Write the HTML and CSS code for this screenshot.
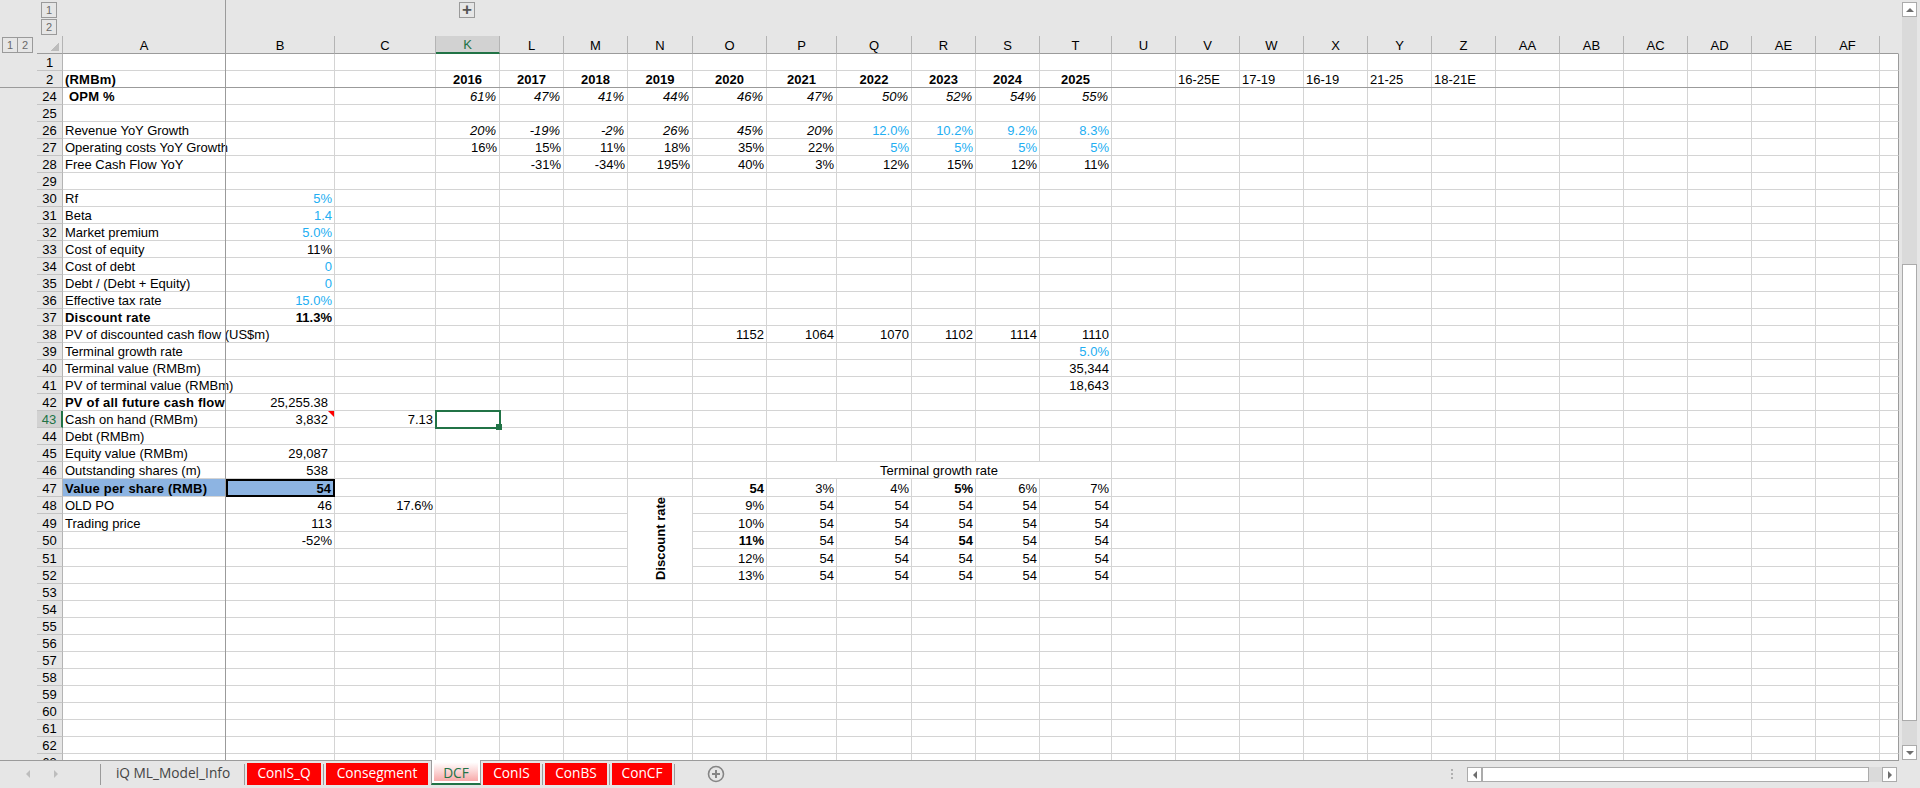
FILE: index.html
```html
<!DOCTYPE html>
<html lang="en">
<head>
  <meta charset="utf-8">
  <title>DCF - Model</title>
  <link rel="stylesheet" href="styles.css">
</head>
<body>
  <div class="app">
    <div class="freeze-v"></div>
    <div class="freeze-h"></div>

    <div class="workspace">
      <div class="pane">
        <div class="outline-top">
          <div class="outline-levels">
            <span class="outline-btn">1</span>
            <span class="outline-btn">2</span>
          </div>
          <span class="outline-btn outline-plus">+</span>
        </div>
        <div class="sheet-row">
          <div class="gutter">
            <span class="outline-btn">1</span><span class="outline-btn outline-joined">2</span>
          </div>
          <div class="grid-clip">
            <table id="grid" class="grid"></table>
          </div>
        </div>
      </div>

      <div class="vscroll">
        <span class="sb-btn"><i class="arrow arrow-up"></i></span>
        <span class="sb-thumb-v"></span>
        <span class="sb-btn sb-btn-end"><i class="arrow arrow-down"></i></span>
      </div>
    </div>

    <div class="tabbar">
      <div class="tab-nav">
        <i class="arrow arrow-left arrow-dim"></i>
        <i class="arrow arrow-right arrow-dim"></i>
      </div>
      <span class="tab-sep"></span>
      <span class="tab tab-plain w-info">iQ ML_Model_Info</span>
      <span class="tab-sep"></span>
      <span class="tab tab-red w-isq">ConIS_Q</span>
      <span class="tab-sep"></span>
      <span class="tab tab-red w-seg">Consegment</span>
      <span class="tab tab-active">DCF</span>
      <span class="tab tab-red w-is">ConIS</span>
      <span class="tab-sep"></span>
      <span class="tab tab-red w-bs">ConBS</span>
      <span class="tab-sep"></span>
      <span class="tab tab-red w-cf">ConCF</span>
      <span class="tab-sep"></span>
      <svg class="add-sheet" width="18" height="18" viewBox="0 0 18 18">
        <circle cx="9" cy="9" r="7.5" fill="none" stroke="#858585" stroke-width="1.6"/>
        <path d="M9 5v8M5 9h8" stroke="#858585" stroke-width="2" fill="none"/>
      </svg>

      <div class="tab-right">
        <div class="resize-dots"><i></i><i></i><i></i></div>
        <div class="hscroll">
          <span class="sb-btn"><i class="arrow arrow-left"></i></span>
          <span class="sb-thumb-h"></span>
          <span class="sb-btn"><i class="arrow arrow-right"></i></span>
        </div>
      </div>
    </div>
  </div>

  <script src="script.js"></script>
</body>
</html>
```

FILE: styles.css
```css
html, body {
  margin: 0;
  padding: 0;
  height: 100%;
  overflow: hidden;
  background-color: #e6e6e6;
  color: #000;
  font-family: "Liberation Sans", Arial, sans-serif;
  font-size: 13px;
}

.app {
  position: relative;
  display: flex;
  flex-direction: column;
  width: 1920px;
  height: 788px;
}

.freeze-v {
  position: absolute;
  top: 0;
  left: 225px;
  width: 1px;
  height: 760px;
  background: #9b9b9b;
  z-index: 1;
}

.freeze-h {
  position: absolute;
  top: 87px;
  left: 0;
  width: 1899px;
  height: 1px;
  background: #9b9b9b;
  z-index: 1;
}

.workspace {
  display: flex;
  height: 760px;
}

.pane {
  display: flex;
  flex-direction: column;
  width: 1899px;
}

/* outline buttons */
.outline-top {
  display: flex;
  height: 36px;
  padding-left: 41px;
  box-sizing: border-box;
}

.outline-levels {
  display: flex;
  flex-direction: column;
  gap: 1px;
  padding-top: 2px;
}

.outline-btn {
  display: block;
  width: 16px;
  height: 16px;
  box-sizing: border-box;
  border: 1px solid #9a9a9a;
  color: #6a6a6a;
  font-size: 11px;
  line-height: 14px;
  text-align: center;
}

.outline-plus {
  margin: 2px 0 0 402px;
  color: #555;
  font-size: 17px;
  font-weight: bold;
  line-height: 13px;
}

.sheet-row {
  display: flex;
  height: 724px;
}

.gutter {
  display: flex;
  align-items: flex-start;
  width: 37px;
  padding: 1px 0 0 2px;
  box-sizing: border-box;
}

.outline-joined {
  margin-left: -1px;
}

.grid-clip {
  width: 1862px;
  height: 724px;
  overflow: hidden;
  background: #fff;
}

/* sheet */
.grid {
  table-layout: fixed;
  width: 1862px;
  border-collapse: separate;
  border-spacing: 0;
}

.grid td,
.grid th {
  box-sizing: border-box;
  height: 17px;
  padding: 0 2px 0 2px;
  border-right: 1px solid #d4d4d4;
  border-bottom: 1px solid #d4d4d4;
  font-size: 13px;
  font-weight: normal;
  line-height: 15px;
  text-align: right;
  white-space: nowrap;
  vertical-align: bottom;
}

.grid th.col {
  height: 18px;
  padding: 0;
  background: #e6e6e6;
  border-right-color: #b4b4b4;
  border-bottom-color: #9b9b9b;
  text-align: center;
}

.grid th.col-rest {
  border-right-color: transparent;
}

.grid th.col-on {
  background: #d2d2d2;
  color: #217346;
  border-bottom: 2px solid #217346;
}

.grid th.corner {
  background:
    linear-gradient(135deg, transparent 50%, #bcbcbc 50%) 13px 6px / 9px 9px no-repeat,
    #e6e6e6;
  border-right-color: #b4b4b4;
  border-bottom-color: #9b9b9b;
}

.grid th.rownum {
  padding: 0;
  background: #e6e6e6;
  border-right-color: #b4b4b4;
  border-bottom-color: #c4c4c4;
  text-align: center;
}

.grid th.rownum-on {
  background: #d2d2d2;
  color: #217346;
  border-right: 2px solid #217346;
}

.grid td.last {
  border-right-color: #9b9b9b;
}

.grid .tall td,
.grid .tall th {
  height: 18px;
}

.grid td.l { text-align: left; }
.grid td.c { text-align: center; }
.grid td.b { font-weight: bold; }
.grid td.l.b { letter-spacing: 0.2px; }
.grid td.i { font-style: italic; padding-right: 3px; }
.grid td.blue { color: #22aef2; }
.grid td.pad { padding-right: 6px; }
.grid td.clip { overflow: hidden; }
.grid td.indent { padding-left: 6px; }
.grid td.band { background: #8db4e2; }

.grid td.boxed {
  position: relative;
  z-index: 2;
  outline: 2px solid #000;
  outline-offset: -2px;
  padding-right: 3px;
}

.grid td.note {
  position: relative;
}

.grid td.note::after {
  content: "";
  position: absolute;
  top: 0;
  right: 0;
  border-top: 6px solid #f00;
  border-left: 6px solid transparent;
}

.grid td.selected {
  position: relative;
  z-index: 2;
  outline: 2px solid #217346;
  outline-offset: -1px;
}

.grid td.selected::after {
  content: "";
  position: absolute;
  right: -3px;
  bottom: -3px;
  width: 6px;
  height: 6px;
  background: #217346;
}

.grid td.merged-v {
  padding: 0;
  text-align: center;
  vertical-align: middle;
}

.rotated {
  display: inline-block;
  writing-mode: vertical-rl;
  transform: rotate(180deg);
  font-weight: bold;
}

/* scrollbars */
.vscroll {
  display: flex;
  flex-direction: column;
  width: 15px;
  margin: 2px 3px 0 3px;
  background: #dadada;
}

.sb-btn {
  display: flex;
  flex: none;
  align-items: center;
  justify-content: center;
  width: 15px;
  height: 15px;
  box-sizing: border-box;
  border: 1px solid #ababab;
  background: #fff;
}

.sb-btn-end {
  margin-top: auto;
}

.sb-thumb-v {
  width: 15px;
  height: 457px;
  margin-top: 247px;
  box-sizing: border-box;
  border: 1px solid #ababab;
  background: #fff;
}

.arrow {
  display: block;
  width: 0;
  height: 0;
  border: 4px solid transparent;
}

.arrow-up { border-bottom-color: #6e6e6e; border-top-width: 0; }
.arrow-down { border-top-color: #6e6e6e; border-bottom-width: 0; }
.arrow-left { border-right-color: #6e6e6e; border-left-width: 0; }
.arrow-right { border-left-color: #6e6e6e; border-right-width: 0; }
.arrow-dim.arrow-left { border-right-color: #bdbdbd; }
.arrow-dim.arrow-right { border-left-color: #bdbdbd; }

/* sheet tabs */
.tabbar {
  display: flex;
  align-items: flex-start;
  height: 28px;
  box-sizing: border-box;
  padding-left: 26px;
  background:
    linear-gradient(#9b9b9b, #9b9b9b) 0 0 / 1899px 1px no-repeat,
    #e6e6e6;
  font-family: "Open Sans", "Noto Sans", sans-serif;
  font-size: 13.7px;
}

.tab-nav {
  display: flex;
  gap: 24px;
  width: 73px;
  padding-top: 10px;
}

.tab-sep {
  flex: none;
  width: 1px;
  height: 21px;
  margin: 4px 1px 0 1px;
  background: #9b9b9b;
}

.tab {
  flex: none;
  height: 22px;
  margin-top: 3px;
  line-height: 20px;
  text-align: center;
}

.tab-plain { color: #444; }
.tab-red {
  margin-left: 1px;
  margin-right: 1px;
  background: #f00;
  color: #fff;
}

.w-info { width: 140px; margin-left: 1px; }
.w-isq { width: 74px; }
.w-seg { width: 102px; }
.w-is { width: 57px; }
.w-bs { width: 62px; }
.w-cf { width: 60px; }

.tab-active {
  width: 50px;
  height: 25px;
  margin: 0 1px 0 2px;
  box-sizing: border-box;
  border-left: 1px solid #9b9b9b;
  border-right: 1px solid #9b9b9b;
  border-bottom: 2px solid #217346;
  background: linear-gradient(#fff 10%, #f7a0a0);
  box-shadow: inset 0 0 0 2px #fff;
  color: #217346;
  line-height: 25px;
}

.add-sheet {
  flex: none;
  margin: 5px 0 0 31px;
}

.tab-right {
  display: flex;
  margin-left: auto;
  padding: 7px 23px 0 0;
}

.resize-dots {
  display: flex;
  flex-direction: column;
  gap: 2px;
  width: 16px;
  padding: 2px 0 0 0;
}

.resize-dots i {
  display: block;
  width: 2px;
  height: 2px;
  background: #b0b0b0;
}

.hscroll {
  display: flex;
  width: 430px;
  height: 15px;
  background: #dadada;
}

.sb-thumb-h {
  width: 387px;
  height: 15px;
  box-sizing: border-box;
  border: 1px solid #ababab;
  background: #fff;
  margin-right: auto;
}
```

FILE: script.js
```js
var COLS = ['A', 'B', 'C', 'K', 'L', 'M', 'N', 'O', 'P', 'Q', 'R', 'S', 'T', 'U', 'V', 'W', 'X',
  'Y', 'Z', 'AA', 'AB', 'AC', 'AD', 'AE', 'AF', ''];
var WIDTHS = [163, 109, 101, 64, 64, 64, 65, 74, 70, 75, 64, 64, 72];

var ROW_NUMS = [1, 2];
for (var n = 24; n <= 63; n++) ROW_NUMS.push(n);

var rows = {};

function put(row, col, text, cls) {
  rows[row] = rows[row] || {};
  rows[row][col] = { text: text, cls: cls || '' };
}

// fills cells left to right, starting at a column
function across(row, col, values, cls) {
  var start = COLS.indexOf(col);
  values.forEach(function (v, i) {
    if (v !== '') put(row, COLS[start + i], v, cls);
  });
}

function label(row, text, cls) {
  put(row, 'A', text, 'l ' + (cls || ''));
}

label(2, '(RMBm)', 'b');
across(2, 'K', ['2016', '2017', '2018', '2019', '2020', '2021', '2022', '2023', '2024', '2025'], 'b c');
across(2, 'V', ['16-25E', '17-19', '16-19', '21-25', '18-21E'], 'l');

label(24, 'OPM %', 'b indent');
across(24, 'K', ['61%', '47%', '41%', '44%', '46%', '47%', '50%', '52%', '54%', '55%'], 'i');

label(26, 'Revenue YoY Growth');
across(26, 'K', ['20%', '-19%', '-2%', '26%', '45%', '20%'], 'i');
across(26, 'Q', ['12.0%', '10.2%', '9.2%', '8.3%'], 'blue');

label(27, 'Operating costs YoY Growth');
across(27, 'K', ['16%', '15%', '11%', '18%', '35%', '22%']);
across(27, 'Q', ['5%', '5%', '5%', '5%'], 'blue');

label(28, 'Free Cash Flow YoY');
across(28, 'L', ['-31%', '-34%', '195%', '40%', '3%', '12%', '15%', '12%', '11%']);

label(30, 'Rf');
put(30, 'B', '5%', 'blue');
label(31, 'Beta');
put(31, 'B', '1.4', 'blue');
label(32, 'Market premium');
put(32, 'B', '5.0%', 'blue');
label(33, 'Cost of equity');
put(33, 'B', '11%');
label(34, 'Cost of debt');
put(34, 'B', '0', 'blue');
label(35, 'Debt / (Debt + Equity)');
put(35, 'B', '0', 'blue');
label(36, 'Effective tax rate');
put(36, 'B', '15.0%', 'blue');
label(37, 'Discount rate', 'b');
put(37, 'B', '11.3%', 'b');

label(38, 'PV of discounted cash flow (US$m)');
across(38, 'O', ['1152', '1064', '1070', '1102', '1114', '1110']);
label(39, 'Terminal growth rate');
put(39, 'T', '5.0%', 'blue');
label(40, 'Terminal value (RMBm)');
put(40, 'T', '35,344');
label(41, 'PV of terminal value (RMBm)');
put(41, 'T', '18,643');
label(42, 'PV of all future cash flow', 'b clip');
put(42, 'B', '25,255.38', 'pad');

label(43, 'Cash on hand (RMBm)');
put(43, 'B', '3,832', 'pad note');
put(43, 'C', '7.13');
put(43, 'K', '', 'selected');
label(44, 'Debt (RMBm)');
label(45, 'Equity value (RMBm)');
put(45, 'B', '29,087', 'pad');
label(46, 'Outstanding shares (m)');
put(46, 'B', '538', 'pad');
put(46, 'P', 'Terminal growth rate', 'c');
rows[46].P.colspan = 5;

label(47, 'Value per share (RMB)', 'b band');
put(47, 'B', '54', 'b band boxed');
across(47, 'O', ['54'], 'b');
across(47, 'P', ['3%', '4%']);
put(47, 'R', '5%', 'b');
across(47, 'S', ['6%', '7%']);

label(48, 'OLD PO');
put(48, 'B', '46');
put(48, 'C', '17.6%');
label(49, 'Trading price');
put(49, 'B', '113');
put(50, 'B', '-52%');

put(48, 'N', '', 'merged-v');
rows[48].N.rowspan = 5;
rows[48].N.html = '<span class="rotated">Discount rate</span>';

['9%', '10%', '11%', '12%', '13%'].forEach(function (pct, i) {
  var row = 48 + i;
  put(row, 'O', pct, i === 2 ? 'b' : '');
  across(row, 'P', ['54', '54', '54', '54', '54']);
});
put(50, 'R', '54', 'b');

function buildGrid() {
  var table = document.getElementById('grid');
  var html = '<colgroup><col style="width:26px">';
  COLS.forEach(function (c, i) {
    var w = i < WIDTHS.length ? WIDTHS[i] : (c === '' ? 19 : 64);
    html += '<col style="width:' + w + 'px">';
  });
  html += '</colgroup>';

  html += '<tr><th class="corner"></th>';
  COLS.forEach(function (c) {
    var cls = 'col' + (c === 'K' ? ' col-on' : '') + (c === '' ? ' col-rest' : '');
    html += '<th class="' + cls + '">' + c + '</th>';
  });
  html += '</tr>';

  var skip = {};
  ROW_NUMS.forEach(function (n) {
    var data = rows[n] || {};
    html += '<tr' + (n === 47 ? ' class="tall"' : '') + '>';
    html += '<th class="rownum' + (n === 43 ? ' rownum-on' : '') + '">' + n + '</th>';
    var left = 0;
    COLS.forEach(function (c) {
      if (left > 0) { left--; return; }
      if (skip[n + c]) return;
      var cell = data[c];
      var cls = (cell ? cell.cls : '') + (c === '' ? ' last' : '');
      var attrs = cls.trim() ? ' class="' + cls.trim() + '"' : '';
      if (cell && cell.colspan) {
        attrs += ' colspan="' + cell.colspan + '"';
        left = cell.colspan - 1;
      }
      if (cell && cell.rowspan) {
        attrs += ' rowspan="' + cell.rowspan + '"';
        for (var r = 1; r < cell.rowspan; r++) skip[(n + r) + c] = true;
      }
      html += '<td' + attrs + '>' + (cell ? (cell.html || cell.text) : '') + '</td>';
    });
    html += '</tr>';
  });
  table.innerHTML = html;
}

buildGrid();
```
